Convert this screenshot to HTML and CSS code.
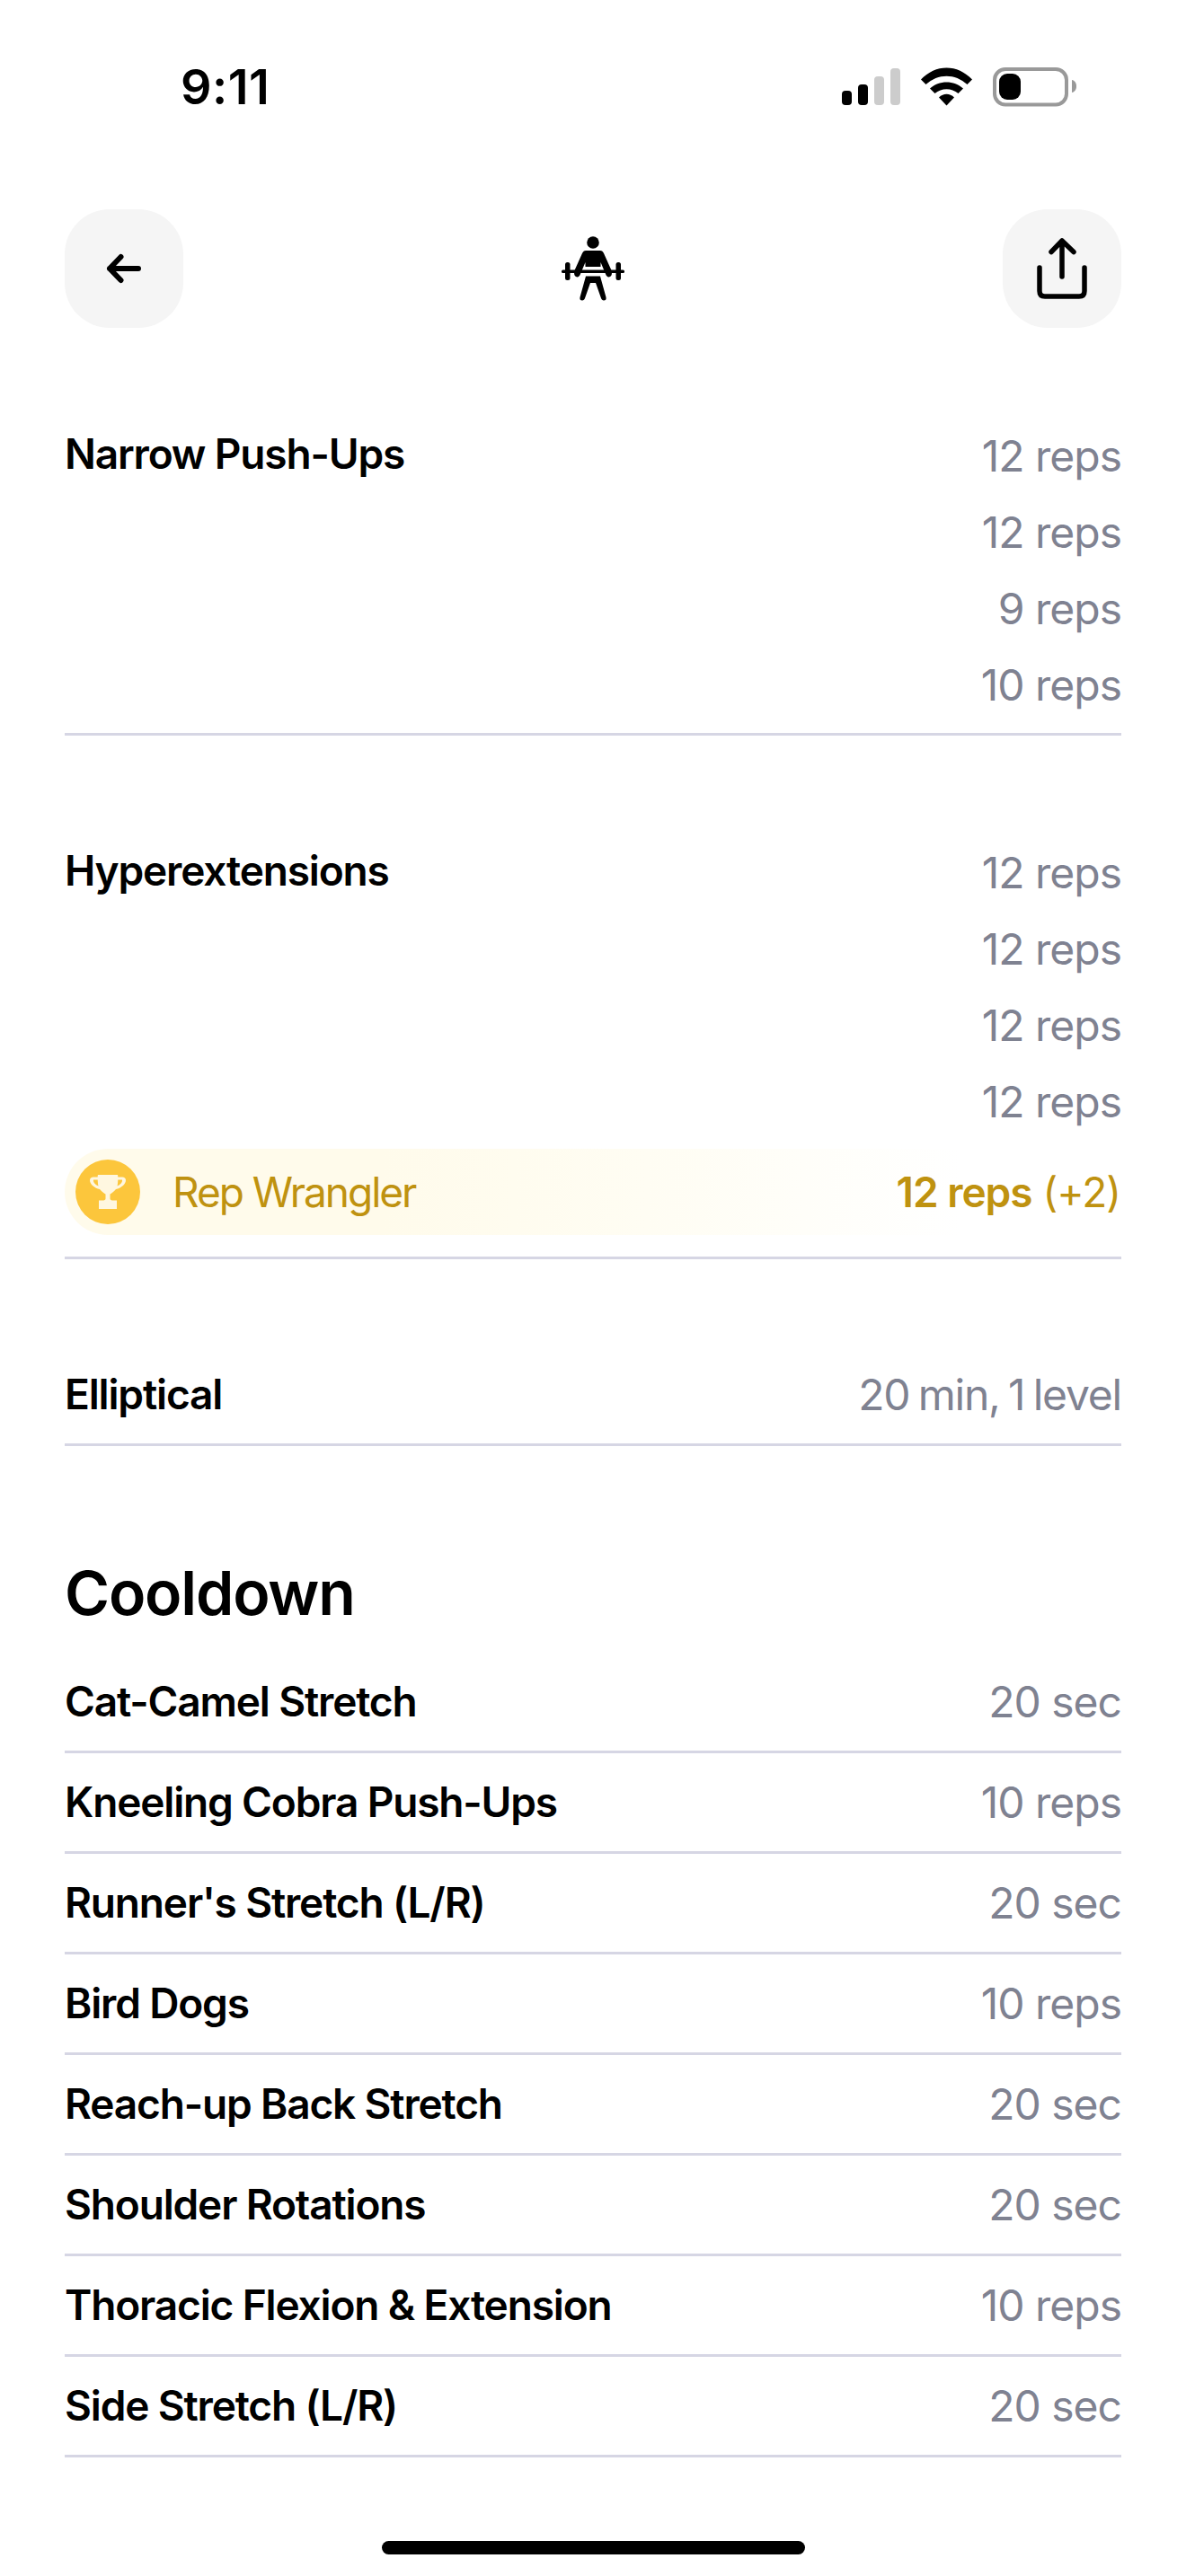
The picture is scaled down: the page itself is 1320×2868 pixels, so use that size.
FILE: index.html
```html
<!DOCTYPE html>
<html lang="en">
<head>
<meta charset="utf-8">
<title>Workout</title>
<link rel="stylesheet" href="styles.css">
</head>
<body>
<div class="screen">
  <div class="status">
    <span class="time">9:11</span>
    <svg class="status-icons" width="262" height="44" viewBox="937 75 262 44">
      <rect x="937" y="101" width="11" height="16" rx="4" fill="#000"/>
      <rect x="955" y="94" width="11" height="23" rx="4" fill="#000"/>
      <rect x="973" y="85" width="11" height="32" rx="4" fill="#ccc"/>
      <rect x="991" y="76" width="11" height="41" rx="4" fill="#ccc"/>
      <path d="M1025 88.5C1041 71 1066 71 1082 88.5L1076.500 94C1063 81.500 1044 81.500 1030.500 94Z" fill="#000"/>
      <path d="M1035 98.500C1045 89 1062 89 1072 98.500L1066.500 104C1059 97.500 1048 97.500 1040.500 104Z" fill="#000"/>
      <path d="M1045 108.500C1050 103.500 1057 103.500 1062 108.500L1053.500 117.500Z" fill="#000"/>
      <rect x="1107" y="77" width="80" height="39.500" rx="12" fill="none" stroke="#999" stroke-width="4"/>
      <rect x="1112" y="82" width="24" height="29" rx="9" fill="#000"/>
      <path d="M1193 89C1196 89.500 1198 92 1198 96C1198 100 1196 102.500 1193 103Z" fill="#999"/>
    </svg>
  </div>

  <header class="topbar">
    <button class="square-btn">
      <svg width="40" height="34" viewBox="118 283 40 34"><path d="M154 300H122M134.500 287L122 300L134.500 313" fill="none" stroke="#000" stroke-width="6" stroke-linecap="round" stroke-linejoin="round"/></svg>
    </button>
    <svg class="lifter" width="70" height="72" viewBox="45 14 70 72">
      <circle cx="80" cy="21" r="6.800"/>
      <path d="M72 30H88C90 30 91 31 92 33L100.500 52C101.500 55 101 58 99 59C97 60 95 59 94 56L88.500 43V48H71.500V43L66 56C65 59 63 60 61 59C59 58 58.500 55 59.500 52L68 33C69 31 70 30 72 30Z"/>
      <rect x="45" y="51.500" width="70" height="3.500" rx="1.500"/>
      <rect x="49" y="43" width="5.500" height="20" rx="2.500"/>
      <rect x="105.500" y="43" width="5.500" height="20" rx="2.500"/>
      <path d="M72 58.500H88L94.500 82C95 84.500 94 85.500 92 85.500C90.500 85.500 89.500 84.500 89 83L83 66H77L71 83C70.500 84.500 69.500 85.500 68 85.500C66 85.500 65 84.500 65.500 82Z"/>
    </svg>
    <button class="square-btn">
      <svg width="58" height="70" viewBox="1153 265 58 70"><path d="M1182 309V269M1170 281.500L1182 269L1195 281.500M1157 299V325C1157 329 1159 331 1163 331H1201C1205 331 1207 329 1207 325V299" fill="none" stroke="#000" stroke-width="5.500" stroke-linecap="round" stroke-linejoin="round"/></svg>
    </button>
  </header>

  <section class="block-first">
    <div class="exercise">
      <div class="name">Narrow Push-Ups</div>
      <div class="sets">
        <div>12 reps</div><div>12 reps</div><div>9 reps</div><div>10 reps</div>
      </div>
    </div>
    <div class="exercise with-award">
      <div class="name">Hyperextensions</div>
      <div class="sets">
        <div>12 reps</div><div>12 reps</div><div>12 reps</div><div>12 reps</div>
      </div>
      <div class="award">
        <div class="award-left">
          <span class="award-badge">
            <svg width="44" height="44" viewBox="38 36 44 44">
              <path d="M49 39H71C71.300 40 71.300 41 71.300 41.500H76C78.500 41.500 80 43 80 45C80 49.500 74.500 54 69 55C66.500 58 64 59.500 62.500 60.500V65.500C62.500 67 64 67.500 66 67.500H70V77H50V67.500H54C56 67.500 57.500 67 57.500 65.500V60.500C56 59.500 53.500 58 51 55C45.500 54 40 49.500 40 45C40 43 41.500 41.500 44 41.500H48.700C48.700 41 48.700 40 49 39ZM44 44.500C43.500 47 46 50 49.500 51.500C49 49.500 48.800 47 48.700 44.500ZM76 44.500H71.300C71.200 47 71 49.500 70.500 51.500C74 50 76.500 47 76 44.500Z" fill="#fff7e0" fill-rule="evenodd"/>
            </svg>
          </span>
          <span>Rep Wrangler</span>
        </div>
        <div class="award-val"><b>12 reps</b> (+2)</div>
      </div>
    </div>
    <div class="exercise single">
      <div class="name">Elliptical</div>
      <div class="val tight">20 min, 1 level</div>
    </div>
  </section>

  <h2 class="heading">Cooldown</h2>
  <section>
    <div class="row"><div class="name">Cat-Camel Stretch</div><div class="val">20 sec</div></div>
    <div class="row"><div class="name">Kneeling Cobra Push-Ups</div><div class="val">10 reps</div></div>
    <div class="row"><div class="name">Runner's Stretch (L/R)</div><div class="val">20 sec</div></div>
    <div class="row"><div class="name">Bird Dogs</div><div class="val">10 reps</div></div>
    <div class="row"><div class="name">Reach-up Back Stretch</div><div class="val">20 sec</div></div>
    <div class="row"><div class="name">Shoulder Rotations</div><div class="val">20 sec</div></div>
    <div class="row"><div class="name">Thoracic Flexion &amp; Extension</div><div class="val">10 reps</div></div>
    <div class="row"><div class="name">Side Stretch (L/R)</div><div class="val">20 sec</div></div>
  </section>
  <div class="home-indicator"></div>
</div>
</body>
</html>
```
FILE: styles.css
```css
* { box-sizing: border-box; }
html, body { margin: 0; padding: 0; background: #fff; }
body { font-family: Inter, "Liberation Sans", sans-serif; color: #000; }
.screen { position: relative; width: 1320px; height: 2868px; padding: 0 72px; overflow: hidden; }

.status { height: 233px; display: flex; justify-content: space-between; align-items: flex-start; padding: 65px 49px 0 129px; }
.time { font-size: 54px; line-height: 64px; font-weight: 600; letter-spacing: 0.500px; }
.status-icons { margin-top: 10px; }

.topbar { height: 132px; display: flex; justify-content: space-between; align-items: center; }
.square-btn { width: 132px; height: 132px; border: 0; padding: 0; border-radius: 50px; background: #f5f5f5; display: flex; align-items: center; justify-content: center; }
.lifter { fill: #000; }

.block-first { padding-top: 99.500px; }
.exercise { position: relative; display: flex; justify-content: space-between; border-bottom: 3px solid #d6d6e4; padding-bottom: 11.500px; margin-bottom: 110px; }
.exercise.with-award { display: block; padding-bottom: 24px; margin-bottom: 108px; }
.exercise.with-award > .name { position: absolute; left: 0; top: 0; }
.exercise.single { margin-bottom: 0; padding-bottom: 12px; }
.exercise.single .name { line-height: 84px; }

.name { font-size: 46px; line-height: 81px; font-weight: 600; letter-spacing: -1.150px; }
.sets { font-size: 48px; line-height: 85px; color: #7f8291; text-align: right; letter-spacing: -1px; font-weight: 400; }
.val { font-size: 48px; line-height: 85px; color: #7f8291; letter-spacing: -1px; font-weight: 400; }
.val.tight { letter-spacing: -1.200px; word-spacing: -3px; }

.award { margin-top: 10px; height: 96px; border-radius: 48px 0 0 48px; background: linear-gradient(90deg, #fffbeb 0%, #fffbeb 30%, #fffdf3 55%, #fff 85%); display: flex; justify-content: space-between; align-items: center; padding: 0 1px 0 12px; color: #bf9210; font-size: 46px; letter-spacing: -2px; }
.award-left { display: flex; align-items: center; gap: 36px; }
.award-badge { width: 72px; height: 72px; border-radius: 50%; background: #fcc63c; display: flex; align-items: center; justify-content: center; }
.award-val { letter-spacing: -1px; }
.award-val b { font-weight: 600; }

.heading { margin: 0; padding-top: 126px; font-size: 68px; line-height: 74px; font-weight: 600; letter-spacing: -1.200px; height: 230px; }
.row { height: 112px; display: flex; justify-content: space-between; align-items: center; border-bottom: 3px solid #d6d6e4; }

.home-indicator { position: absolute; left: 425px; top: 2829px; width: 471px; height: 15px; border-radius: 8px; background: #000; }
```
